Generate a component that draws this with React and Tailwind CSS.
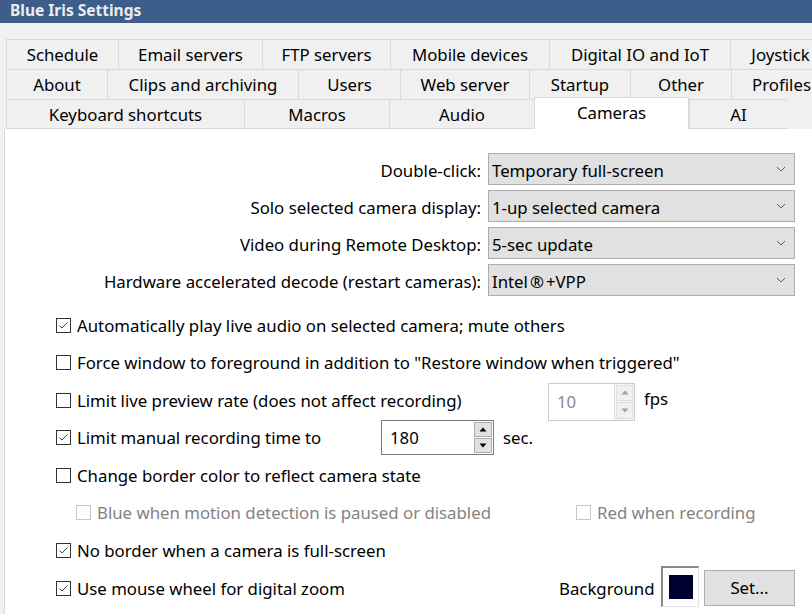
import React from "react";

const FONT = { fontFamily: '"Noto Sans", "Open Sans", sans-serif' };

function Tab({ w, label, selected, bottom, last }) {
  if (selected) {
    return (
      <div
        className={`relative z-10 -mt-[2px] h-[32px] ${w} shrink-0 bg-white border-t border-l border-r border-[#d9d9d9] flex items-center justify-center text-[16.8px] text-black`}
      >
        <span className="-mt-[1px]">{label}</span>
      </div>
    );
  }
  return (
    <div
      className={`h-[30px] ${w} shrink-0 bg-[#f0f0f0] border-t border-l border-[#d9d9d9] ${bottom ? "border-b pt-[2px]" : "pt-[1px]"} ${last ? "border-r" : ""} flex items-center justify-center text-[16.8px] text-black whitespace-nowrap`}
    >
      {label}
    </div>
  );
}

function Chevron() {
  return (
    <svg width="10" height="6" viewBox="0 0 10 6" className="shrink-0">
      <polyline points="1,1 5,5 9,1" fill="none" stroke="#606060" strokeWidth="1" />
    </svg>
  );
}

function Select({ children }) {
  return (
    <div className="h-[32px] w-[307px] bg-[#e1e1e1] border border-[#adadad] flex items-center pl-[3px] pr-[8px] text-[16.8px] text-black">
      <span className="flex-1 whitespace-nowrap pt-[3px]">{children}</span>
      <Chevron />
    </div>
  );
}

function Check({ checked, disabled }) {
  return (
    <div
      className={`w-[15px] h-[15px] shrink-0 border ${disabled ? "border-[#c6c6c6]" : "border-[#333333]"} bg-white flex items-center justify-center`}
    >
      {checked && (
        <svg width="13" height="13" viewBox="0 0 13 13">
          <polyline points="2.5,6.5 5,9 10.5,3.5" fill="none" stroke="#444" strokeWidth="1" />
        </svg>
      )}
    </div>
  );
}

function CheckLabel({ checked, disabled, children }) {
  return (
    <div className="flex items-center whitespace-nowrap">
      <Check checked={checked} disabled={disabled} />
      <span className={`ml-[6px] pt-[1px] text-[16.8px] ${disabled ? "text-[#838383]" : "text-black"}`}>{children}</span>
    </div>
  );
}

function Tri({ up, color }) {
  return (
    <svg width="8" height="5" viewBox="0 0 8 5">
      {up ? <polygon points="0.5,4.5 7.5,4.5 4,0.5" fill={color} /> : <polygon points="0.5,0.5 7.5,0.5 4,4.5" fill={color} />}
    </svg>
  );
}

function Spin({ value, disabled, w, h }) {
  return (
    <div
      className={`${w} ${h} flex border ${disabled ? "border-[#cccccc]" : "border-[#7a7a7a]"} bg-white`}
    >
      <div className={`flex-1 flex items-center pl-[8px] text-[16.8px] ${disabled ? "text-[#8a8a8a]" : "text-black"}`}>{value}</div>
      <div className={`w-[20px] flex flex-col gap-[1px] p-[1px] ${disabled ? "bg-[#f4f4f4] border-l border-[#e0e0e0]" : "bg-white"}`}>
        <div className={`flex-1 flex items-center justify-center ${disabled ? "bg-[#f0f0f0] border border-[#e0e0e0]" : "bg-[#e1e1e1] border border-[#adadad]"}`}>
          <Tri up color={disabled ? "#a0a0a0" : "#000"} />
        </div>
        <div className={`flex-1 flex items-center justify-center ${disabled ? "bg-[#f0f0f0] border border-[#e0e0e0]" : "bg-[#e1e1e1] border border-[#adadad]"}`}>
          <Tri color={disabled ? "#a0a0a0" : "#000"} />
        </div>
      </div>
    </div>
  );
}

export default function App() {
  const formRows = [
    ["Double-click:", "Temporary full-screen"],
    ["Solo selected camera display:", "1-up selected camera"],
    ["Video during Remote Desktop:", "5-sec update"],
  ];
  return (
    <div style={FONT} className="w-[812px] h-[614px] overflow-hidden bg-[#f0f0f0] flex flex-col">
      <div className="h-[23px] shrink-0 bg-[#3d5e8a] flex items-center pl-[10px]">
        <span className="text-[15.5px] font-bold text-[#ececec] -mt-[2px]">Blue Iris Settings</span>
      </div>
      <div className="h-[16px] shrink-0" />
      <div className="pl-[6px] overflow-hidden shrink-0">
        <div className="flex">
          <Tab w="w-[112px]" label="Schedule" />
          <Tab w="w-[144px]" label="Email servers" />
          <Tab w="w-[128px]" label="FTP servers" />
          <Tab w="w-[159px]" label="Mobile devices" />
          <Tab w="w-[181px]" label="Digital IO and IoT" />
          <Tab w="w-[100px]" label="Joystick" />
        </div>
        <div className="flex">
          <Tab w="w-[101px]" label="About" />
          <Tab w="w-[191px]" label="Clips and archiving" />
          <Tab w="w-[102px]" label="Users" />
          <Tab w="w-[129px]" label="Web server" />
          <Tab w="w-[101px]" label="Startup" />
          <Tab w="w-[101px]" label="Other" />
          <Tab w="w-[100px]" label="Profiles" />
        </div>
        <div className="flex h-[30px]">
          <Tab w="w-[238px]" label="Keyboard shortcuts" bottom />
          <Tab w="w-[145px]" label="Macros" bottom />
          <Tab w="w-[145px]" label="Audio" bottom />
          <Tab w="w-[155px]" label="Cameras" selected />
          <Tab w="w-[98px]" label="AI" bottom />
        </div>
      </div>
      <div className="flex-1 ml-[4px] bg-white border-l border-[#d9d9d9] pt-[24px] pr-[17px]">
        <div className="grid grid-cols-[476px_307px] gap-x-[7px] gap-y-[5px]">
          {formRows.map(([l, v]) => (
            <React.Fragment key={l}>
              <div className="h-[32px] pt-[3px] flex items-center justify-end text-[16.8px] text-black whitespace-nowrap">{l}</div>
              <Select>{v}</Select>
            </React.Fragment>
          ))}
          <div className="h-[32px] pt-[3px] flex items-center justify-end text-[16.8px] text-black whitespace-nowrap">
            Hardware accelerated decode (restart cameras):
          </div>
          <Select>
            Intel<span className="px-[2px]">®</span>+VPP
          </Select>
        </div>
        <div className="mt-[10px] pl-[51px] flex flex-col">
          <div className="h-[38px] flex items-center">
            <CheckLabel checked>Automatically play live audio on selected camera; mute others</CheckLabel>
          </div>
          <div className="h-[37px] flex items-center">
            <CheckLabel>Force window to foreground in addition to "Restore window when triggered"</CheckLabel>
          </div>
          <div className="h-[38px] flex items-center">
            <div className="w-[492px]">
              <CheckLabel>Limit live preview rate (does not affect recording)</CheckLabel>
            </div>
            <div className="mt-[3px] flex items-center">
              <Spin value="10" disabled w="w-[87px]" h="h-[38px]" />
              <span className="ml-[9px] -mt-[6px] text-[16.8px] text-black">fps</span>
            </div>
          </div>
          <div className="h-[37px] flex items-center">
            <div className="w-[325px]">
              <CheckLabel checked>Limit manual recording time to</CheckLabel>
            </div>
            <Spin value="180" w="w-[113px]" h="h-[35px]" />
            <span className="ml-[9px] pt-[1px] text-[16.8px] text-black">sec.</span>
          </div>
          <div className="h-[38px] flex items-center">
            <CheckLabel>Change border color to reflect camera state</CheckLabel>
          </div>
          <div className="h-[37px] flex items-center pl-[20px]">
            <div className="w-[500px]">
              <CheckLabel disabled>Blue when motion detection is paused or disabled</CheckLabel>
            </div>
            <CheckLabel disabled>Red when recording</CheckLabel>
          </div>
          <div className="h-[38px] flex items-center">
            <CheckLabel checked>No border when a camera is full-screen</CheckLabel>
          </div>
          <div className="h-[38px] flex items-center">
            <div className="w-[503px]">
              <CheckLabel checked>Use mouse wheel for digital zoom</CheckLabel>
            </div>
            <span className="w-[102px] pt-[1px] text-[16.8px] text-black">Background</span>
            <div className="w-[38px] h-[41px] -mt-[4px] border-t-2 border-l-2 border-[#8a8a8a] border-r border-b border-r-[#e3e3e3] border-b-[#e3e3e3] bg-white flex items-center justify-center">
              <div className="w-[24px] h-[24px] bg-[#000030]" />
            </div>
            <div className="ml-[5px] w-[91px] h-[36px] bg-[#e1e1e1] border border-[#adadad] flex items-center justify-center text-[16.8px] text-black">
              Set...
            </div>
          </div>
        </div>
      </div>
    </div>
  );
}
